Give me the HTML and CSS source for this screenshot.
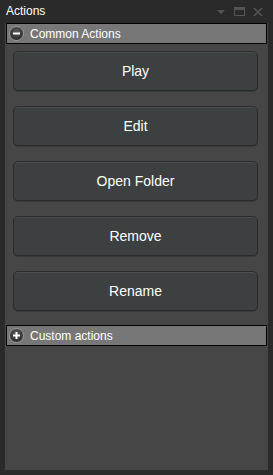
FILE: index.html
```html
<!DOCTYPE html>
<html>
    <head>
        <meta charset="utf-8">
        <title>Actions</title>
        <link rel="stylesheet" href="styles.css">
    </head>
    <body>
        <div class="window">
            <div class="titlebar">
                <span class="title">Actions</span>
                <span class="tools">
                    <svg width="10" height="6" viewBox="0 0 10 6"><path d="M1 1h8L5 5z" fill="#555"/></svg>
                    <svg width="11" height="9" viewBox="0 0 11 9"><rect x="0.5" y="0.5" width="10" height="8" fill="none" stroke="#555"/><rect x="1" y="1" width="9" height="2" fill="#555"/></svg>
                    <svg width="10" height="10" viewBox="0 0 10 10"><path d="M1 1l8 8M9 1l-8 8" stroke="#555" stroke-width="1.6"/></svg>
                </span>
            </div>
            <div class="panel">
                <div class="group-head">
                    <span class="toggle">
                        <svg width="15" height="15" viewBox="0 0 15 15"><rect x="4" y="6.5" width="7" height="2" fill="#fff"/></svg>
                    </span>
                    Common Actions
                </div>
                <div class="buttons">
                    <button>Play</button>
                    <button>Edit</button>
                    <button>Open Folder</button>
                    <button>Remove</button>
                    <button>Rename</button>
                </div>
                <div class="group-head">
                    <span class="toggle">
                        <svg width="15" height="15" viewBox="0 0 15 15"><rect x="4" y="6.5" width="7" height="2" fill="#fff"/><rect x="6.5" y="4" width="2" height="7" fill="#fff"/></svg>
                    </span>
                    Custom actions
                </div>
            </div>
        </div>
    </body>
</html>
```

FILE: styles.css
```css
html, body{
    margin: 0;
    background-color: #2a2a2a;
    font-family: "Liberation Sans", Arial, sans-serif;
    color: #fff;
}
.window{
    height: 475px;
    display: flex;
    flex-direction: column;
}
.titlebar{
    height: 23px;
    display: flex;
    align-items: center;
    justify-content: space-between;
    padding: 0 6px 0 6px;
    flex-shrink: 0;
}
.title{
    font-size: 12px;
    margin-top: -1px;
}
.tools{
    display: flex;
    align-items: center;
    gap: 8px;
    margin-right: 4px;
}
.panel{
    flex: 1;
    margin: 0 5px 5px 5px;
    background-color: #464646;
    display: flex;
    flex-direction: column;
}
.group-head{
    box-sizing: border-box;
    height: 21px;
    margin: 0 1px;
    border: 1px solid #000;
    background-color: #777;
    display: flex;
    align-items: center;
    gap: 6px;
    padding-left: 2px;
    font-size: 12px;
}
.toggle{
    width: 15px;
    height: 15px;
    border-radius: 50%;
    box-sizing: border-box;
    background: radial-gradient(circle at 50% 35%, #5a5a5a, #1e1e1e);
    border: 1px solid #9a9a9a;
    display: flex;
    align-items: center;
    justify-content: center;
}
.toggle svg{
    display: block;
    margin: -1px;
}
.buttons{
    display: flex;
    flex-direction: column;
    gap: 15px;
    padding: 7px 10px 14px 8px;
}
button{
    height: 40px;
    font-family: "Liberation Sans", Arial, sans-serif;
    font-size: 14px;
    color: #fff;
    background-color: #3d4040;
    border: 1px solid #2a2c2c;
    border-radius: 5px;
    box-shadow: inset 0 1px 0 #4b4e4e, 0 1px 0 #3a3a3a;
    cursor: pointer;
}
```
